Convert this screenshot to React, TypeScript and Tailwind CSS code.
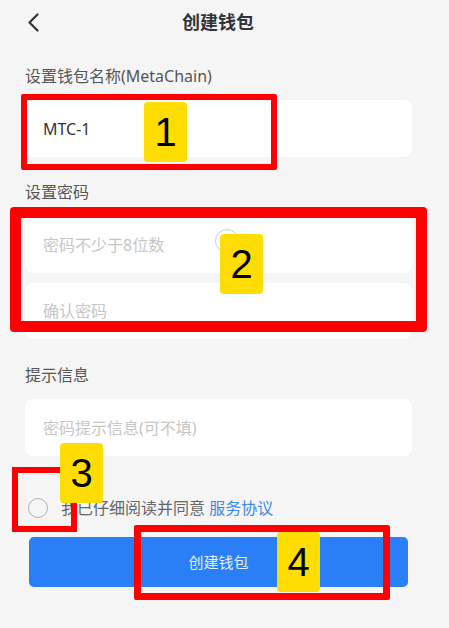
import React from "react";

const font = { fontFamily: '"Noto Sans", "Noto Sans CJK SC", sans-serif' };

function Badge({ n, cls }: { n: string; cls: string }) {
  return (
    <div
      className={`absolute w-[43px] h-[60px] rounded-[4px] bg-[#ffdd00] flex items-center justify-center text-[40px] text-black leading-none ${cls}`}
      style={{ fontFamily: '"Liberation Sans", Arial, sans-serif' }}
    >
      {n}
    </div>
  );
}

export default function App() {
  return (
    <div className="relative w-[449px] h-[628px] overflow-hidden bg-[#f5f5f5]" style={font}>
      {/* header */}
      <div className="flex items-center h-[44px] pl-[27px] pr-[52px]">
        <svg width="12" height="19" viewBox="0 0 12 19" fill="none">
          <path d="M10.5 1.5 L2.5 9.5 L10.5 17.5" stroke="#333" strokeWidth="2.2" strokeLinecap="round" strokeLinejoin="round" />
        </svg>
        <div className="flex-1 text-center text-[18px] font-bold text-[#333]">创建钱包</div>
      </div>

      <div className="pl-[25px] pr-[37px]">
        <div className="mt-[22px] h-[20px] leading-[20px] text-[16px] text-[#555]">设置钱包名称(MetaChain)</div>
        <div className="mt-[14px] h-[57px] rounded-[8px] bg-white flex items-center px-[18px] text-[16px] text-[#333]">MTC-1</div>

        <div className="mt-[25px] h-[20px] leading-[20px] text-[16px] text-[#555]">设置密码</div>
        <div className="mt-[14px] h-[57px] rounded-[8px] bg-white flex items-center px-[18px] text-[16px] text-[#c6c6c6]">密码不少于8位数</div>
        <div className="mt-[10px] h-[56px] rounded-[8px] bg-white flex items-center px-[18px] text-[16px] text-[#c6c6c6]">确认密码</div>

        <div className="mt-[26px] h-[20px] leading-[20px] text-[16px] text-[#555]">提示信息</div>
        <div className="mt-[14px] h-[57px] rounded-[8px] bg-white flex items-center px-[18px] text-[16px] text-[#c6c6c6]">密码提示信息(可不填)</div>
      </div>

      <div className="flex items-center mt-[42px] pl-[28px] h-[20px]">
        <div className="w-[20px] h-[20px] rounded-full border-[1.5px] border-[#b0b0b0]" />
        <div className="ml-[13px] text-[16px] text-[#666]">
          我已仔细阅读并同意 <span className="text-[#3d86ea]">服务协议</span>
        </div>
      </div>

      <div className="mt-[19px] ml-[29px] w-[379px] h-[50px] rounded-[5px] bg-[#2a7ff6] flex items-center justify-center text-[15px] text-[#e8f0ff]">
        创建钱包
      </div>

      {/* overlays */}
      <div className="absolute left-[215px] top-[229px] w-[24px] h-[24px] rounded-full border-[1.5px] border-[#c9c9e8]" />

      <div className="absolute left-[21px] top-[94px] w-[256px] h-[76px] border-[6px] border-[#ff0000] rounded-[2px]" />
      <div className="absolute left-[10px] top-[207px] w-[417px] h-[125px] border-[11px] border-[#ff0000] rounded-[4px]" />
      <div className="absolute left-[12px] top-[467px] w-[65px] h-[65px] border-[6px] border-[#ff0000]" />
      <div className="absolute left-[134px] top-[525px] w-[256px] h-[75px] border-[7px] border-[#ff0000] rounded-[2px]" />

      <Badge n="1" cls="left-[144px] top-[102px]" />
      <Badge n="2" cls="left-[220px] top-[234px]" />
      <Badge n="3" cls="left-[60px] top-[443px]" />
      <Badge n="4" cls="left-[277px] top-[532px]" />
    </div>
  );
}
